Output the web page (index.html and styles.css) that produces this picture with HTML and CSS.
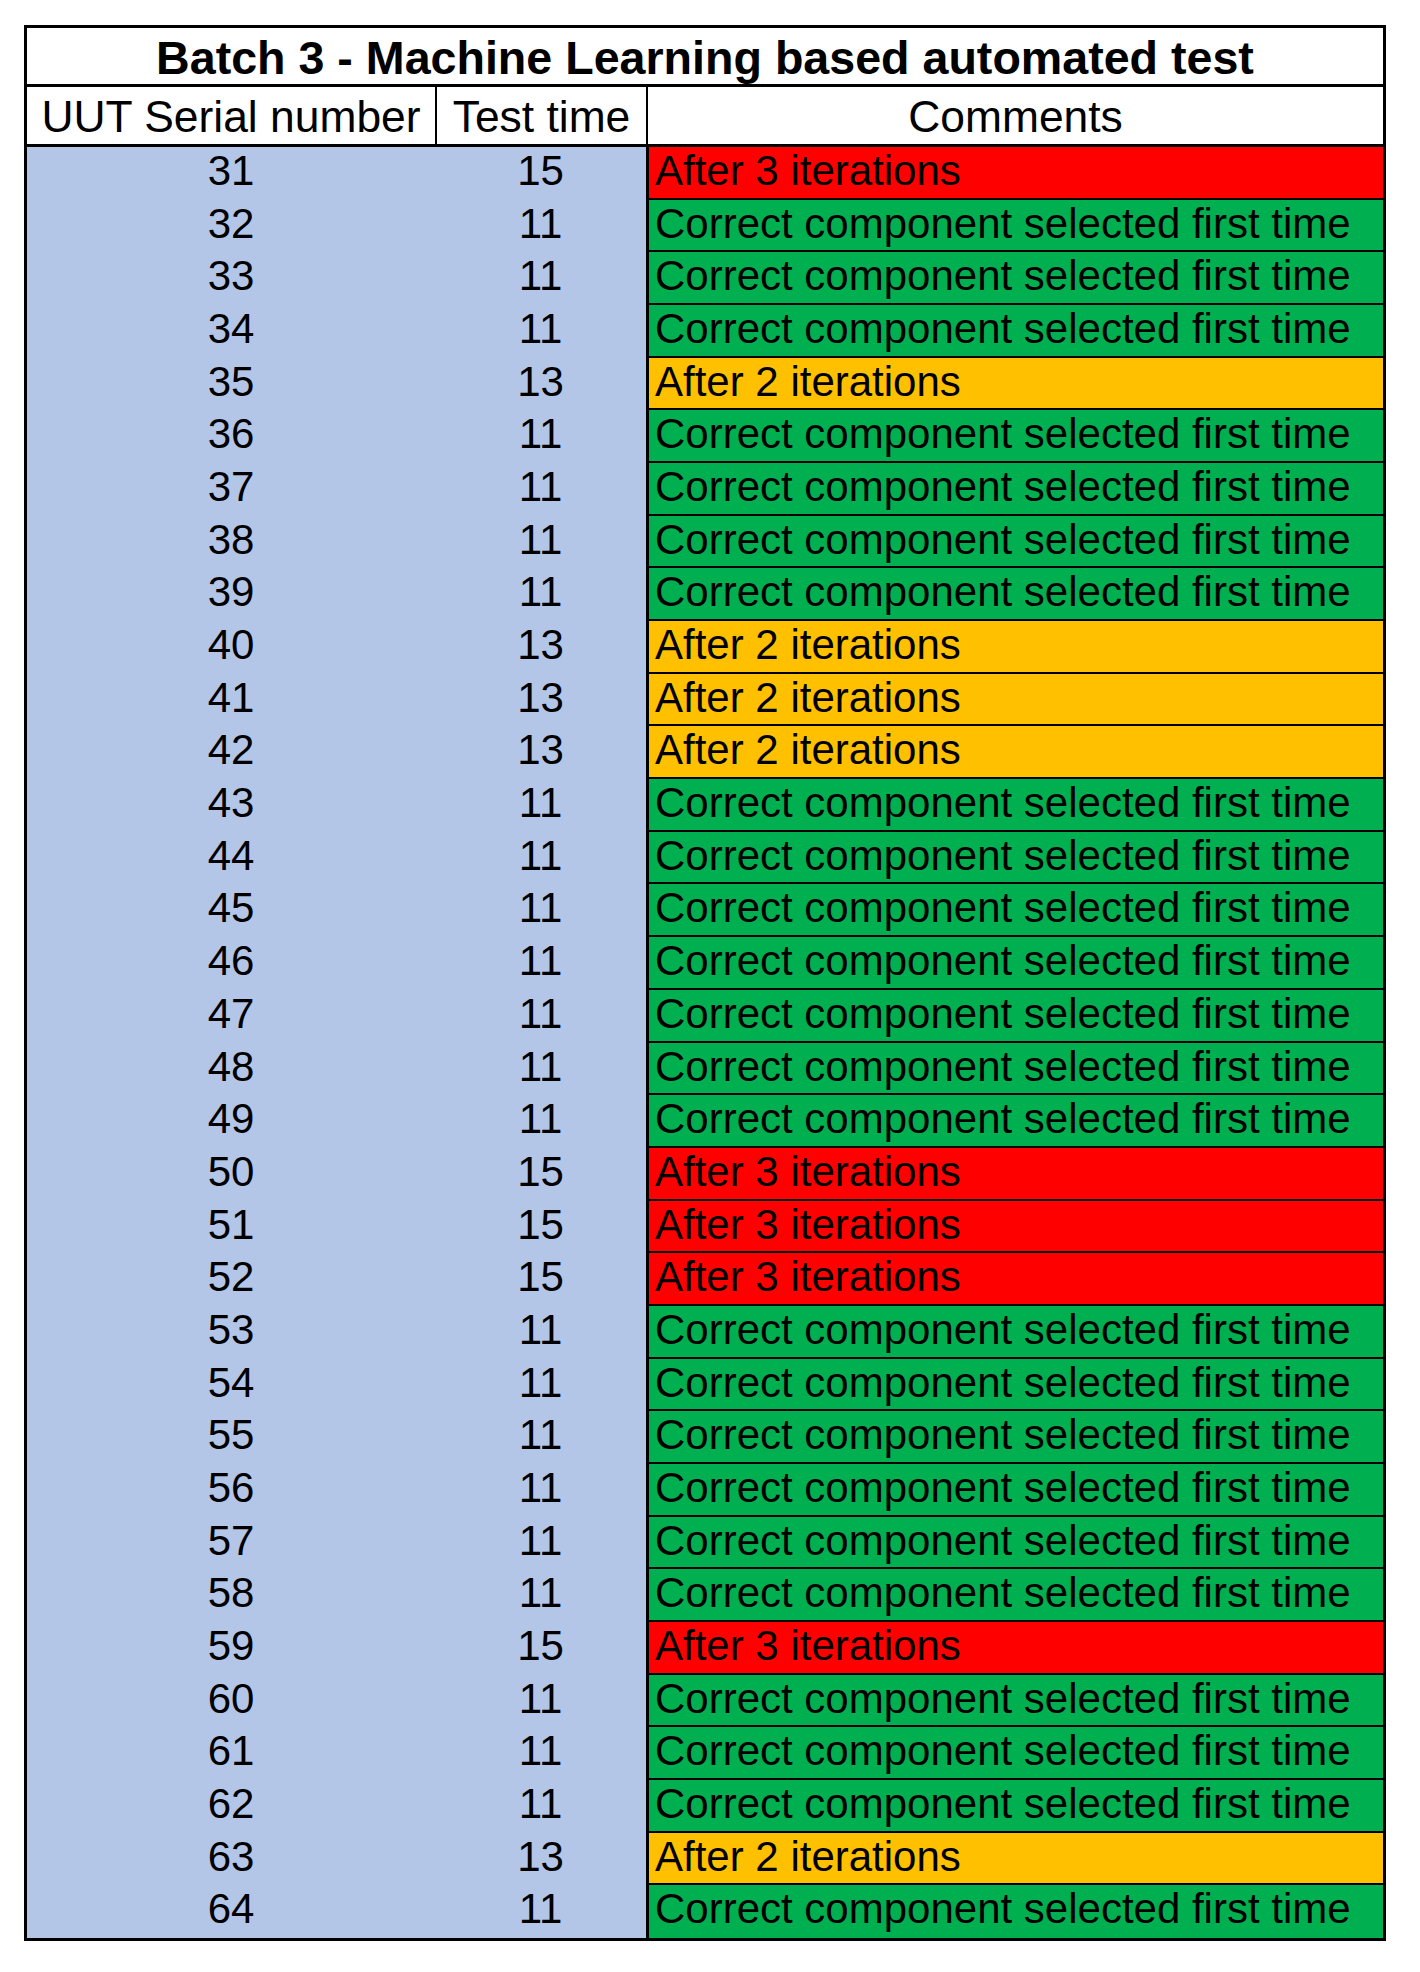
FILE: index.html
```html
<!DOCTYPE html>
<html lang="en">
<head>
<meta charset="utf-8">
<title>Batch 3 - Machine Learning based automated test</title>
<link rel="stylesheet" href="styles.css">
</head>
<body>
<div class="sheet">
  <div class="title">Batch 3 - Machine Learning based automated test</div>
  <div class="head">
    <div class="hc">UUT Serial number</div>
    <div class="hc sep">Test time</div>
    <div class="hc sep">Comments</div>
  </div>
  <div class="rows">
    <div class="num">31</div><div class="num">15</div><div class="cm red">After 3 iterations</div>
    <div class="num">32</div><div class="num">11</div><div class="cm green">Correct component selected first time</div>
    <div class="num">33</div><div class="num">11</div><div class="cm green">Correct component selected first time</div>
    <div class="num">34</div><div class="num">11</div><div class="cm green">Correct component selected first time</div>
    <div class="num">35</div><div class="num">13</div><div class="cm orange">After 2 iterations</div>
    <div class="num">36</div><div class="num">11</div><div class="cm green">Correct component selected first time</div>
    <div class="num">37</div><div class="num">11</div><div class="cm green">Correct component selected first time</div>
    <div class="num">38</div><div class="num">11</div><div class="cm green">Correct component selected first time</div>
    <div class="num">39</div><div class="num">11</div><div class="cm green">Correct component selected first time</div>
    <div class="num">40</div><div class="num">13</div><div class="cm orange">After 2 iterations</div>
    <div class="num">41</div><div class="num">13</div><div class="cm orange">After 2 iterations</div>
    <div class="num">42</div><div class="num">13</div><div class="cm orange">After 2 iterations</div>
    <div class="num">43</div><div class="num">11</div><div class="cm green">Correct component selected first time</div>
    <div class="num">44</div><div class="num">11</div><div class="cm green">Correct component selected first time</div>
    <div class="num">45</div><div class="num">11</div><div class="cm green">Correct component selected first time</div>
    <div class="num">46</div><div class="num">11</div><div class="cm green">Correct component selected first time</div>
    <div class="num">47</div><div class="num">11</div><div class="cm green">Correct component selected first time</div>
    <div class="num">48</div><div class="num">11</div><div class="cm green">Correct component selected first time</div>
    <div class="num">49</div><div class="num">11</div><div class="cm green">Correct component selected first time</div>
    <div class="num">50</div><div class="num">15</div><div class="cm red">After 3 iterations</div>
    <div class="num">51</div><div class="num">15</div><div class="cm red">After 3 iterations</div>
    <div class="num">52</div><div class="num">15</div><div class="cm red">After 3 iterations</div>
    <div class="num">53</div><div class="num">11</div><div class="cm green">Correct component selected first time</div>
    <div class="num">54</div><div class="num">11</div><div class="cm green">Correct component selected first time</div>
    <div class="num">55</div><div class="num">11</div><div class="cm green">Correct component selected first time</div>
    <div class="num">56</div><div class="num">11</div><div class="cm green">Correct component selected first time</div>
    <div class="num">57</div><div class="num">11</div><div class="cm green">Correct component selected first time</div>
    <div class="num">58</div><div class="num">11</div><div class="cm green">Correct component selected first time</div>
    <div class="num">59</div><div class="num">15</div><div class="cm red">After 3 iterations</div>
    <div class="num">60</div><div class="num">11</div><div class="cm green">Correct component selected first time</div>
    <div class="num">61</div><div class="num">11</div><div class="cm green">Correct component selected first time</div>
    <div class="num">62</div><div class="num">11</div><div class="cm green">Correct component selected first time</div>
    <div class="num">63</div><div class="num">13</div><div class="cm orange">After 2 iterations</div>
    <div class="num">64</div><div class="num">11</div><div class="cm green last">Correct component selected first time</div>
  </div>
</div>
</body>
</html>
```

FILE: styles.css
```css
html, body {
  margin: 0;
  padding: 0;
  background: #ffffff;
}

body {
  font-family: "Liberation Sans", Arial, sans-serif;
  color: #000000;
}

.sheet {
  margin: 25px 0 0 24px;
  width: 1362px;
  border: 3px solid #000000;
  box-sizing: border-box;
}

.title {
  height: 59px;
  box-sizing: border-box;
  border-bottom: 3px solid #000000;
  padding-top: 5px;
  font-size: 46.6px;
  font-weight: bold;
  line-height: 51px;
  text-align: center;
  white-space: nowrap;
  overflow: hidden;
}

.head {
  display: grid;
  grid-template-columns: 408px 211px 1fr;
  height: 60px;
  box-sizing: border-box;
  border-bottom: 3px solid #000000;
}

.hc {
  padding-top: 2px;
  font-size: 44.4px;
  line-height: 55px;
  text-align: center;
  white-space: nowrap;
}

.hc.sep {
  border-left: 2px solid #000000;
}

.rows {
  display: grid;
  grid-template-columns: 408px 211px 1fr;
  grid-template-rows: repeat(34, 1fr);
  height: 1791px;
  background: #b4c6e7;
}

.num {
  font-size: 42px;
  line-height: 48px;
  text-align: center;
}

.cm {
  border-left: 3px solid #000000;
  border-bottom: 2px solid #000000;
  box-sizing: border-box;
  padding-left: 6px;
  font-size: 42px;
  line-height: 48px;
  white-space: nowrap;
  overflow: hidden;
}

.cm.last {
  border-bottom: none;
}

.red {
  background: #ff0000;
}

.green {
  background: #00b050;
}

.orange {
  background: #ffc000;
}
```
